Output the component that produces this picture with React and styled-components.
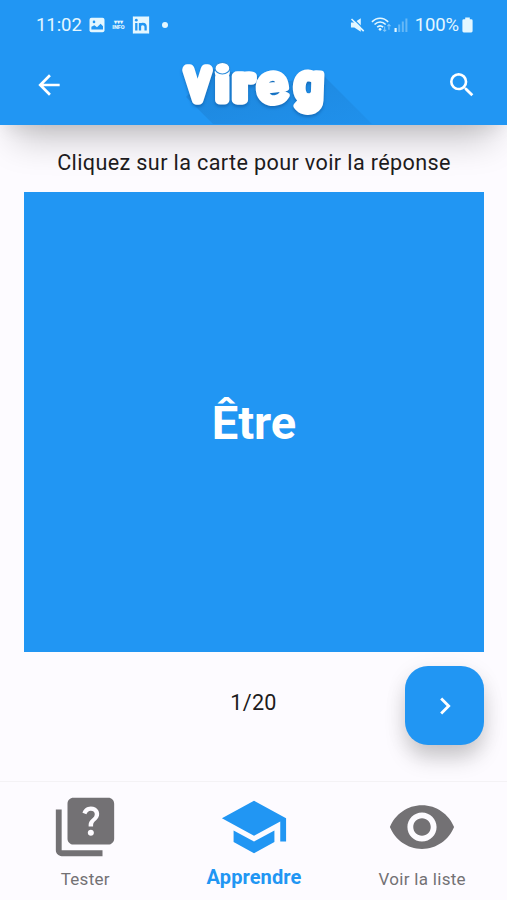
import React from "react";
import styled, { createGlobalStyle } from "styled-components";
import {
  MdArrowBack,
  MdSearch,
  MdChevronRight,
  MdQuiz,
  MdSchool,
  MdVisibility,
} from "react-icons/md";

const BLUE = "#2196f3";

const GlobalStyle = createGlobalStyle`
  * { box-sizing: border-box; }
  body { margin: 0; background: #fdfbff; font-family: Roboto, sans-serif; }
  button { font: inherit; border: 0; padding: 0; background: none; cursor: pointer; }
`;

const Screen = styled.div`
  display: flex;
  flex-direction: column;
  width: 507px;
  height: 900px;
  overflow: hidden;
  background: #fdfbff;
  color: #1d1b20;
`;

const Header = styled.header`
  height: 124.5px;
  flex: none;
  background: ${BLUE};
  color: #fff;
  box-shadow: 0 28px 36px -14px rgba(0, 0, 0, 0.22), 0 10px 16px -6px rgba(0, 0, 0, 0.08);
`;

const StatusBar = styled.div`
  display: flex;
  align-items: center;
  height: 49px;
  padding: 1px 34px 0 36px;
  color: #e4f7ff;
  font-size: 18.5px;
  line-height: 22px;
`;

const Clock = styled.span`
  width: 52.5px;
  letter-spacing: -0.05px;
`;

const Notifications = styled.div`
  display: flex;
  align-items: center;
  flex: 1;
`;

const TinyLabel = styled.span`
  display: flex;
  flex-direction: column;
  width: 15px;
  margin: 0 6px 0 6.5px;
  font-size: 5.5px;
  font-weight: 900;
  line-height: 5px;
  text-align: center;
`;

const Dot = styled.span`
  width: 6px;
  height: 6px;
  margin-left: 12px;
  border-radius: 50%;
  background: currentColor;
`;

const SystemIcons = styled.div`
  display: flex;
  align-items: center;
`;

const Toolbar = styled.div`
  display: flex;
  align-items: center;
  justify-content: space-between;
  height: 75px;
  padding: 0 29px 0 33px;
`;

const IconButton = styled.button`
  display: flex;
  align-items: center;
  justify-content: center;
  width: 32px;
  height: 32px;
  margin-bottom: 3px;
  color: #fff;
`;

const LogoArt = styled.svg`
  display: block;
  width: 232px;
  height: 75px;
  overflow: hidden;
`;

const LogoLetters = styled.g`
  fill: #fff;
  stroke: #fff;
  stroke-linejoin: round;
  stroke-linecap: round;
  text-anchor: middle;
  font-family: Roboto, sans-serif;
  filter: drop-shadow(0 2px 1.5px rgba(0, 50, 110, 0.35));
`;

const Content = styled.main`
  display: flex;
  flex-direction: column;
  flex: 1;
  padding: 24px 23px 0 24px;
`;

const Hint = styled.p`
  margin: 0 0 15.5px;
  font-size: 21.6px;
  line-height: 28px;
  letter-spacing: 0.37px;
  text-align: center;
  white-space: nowrap;
`;

const Card = styled.div`
  display: flex;
  align-items: center;
  justify-content: center;
  flex: none;
  height: 460px;
  background: ${BLUE};
  color: #fff;
  font-size: 47px;
  font-weight: 700;
`;

const Controls = styled.div`
  display: grid;
  grid-template-columns: 1fr 120px 1fr;
  align-items: center;
  margin-top: 14px;
`;

const Counter = styled.span`
  grid-column: 2;
  font-size: 21.6px;
  letter-spacing: 0.3px;
  text-align: center;
  padding: 0 1px 7px 0;
`;

const NextButton = styled.button`
  display: flex;
  align-items: center;
  justify-content: center;
  justify-self: end;
  width: 79px;
  height: 79px;
  border-radius: 23px;
  background: ${BLUE};
  color: #fff;
  box-shadow: 0 15px 22px -2px rgba(0, 0, 0, 0.18), 0 5px 22px rgba(0, 0, 0, 0.08);
`;

const BottomNav = styled.nav`
  display: grid;
  grid-template-columns: 170.5px 167px 169.5px;
  flex: none;
  height: 119px;
  border-top: 1px solid #f4f2f5;
`;

const NavItem = styled.a`
  display: flex;
  flex-direction: column;
  align-items: center;
  padding-top: 10px;
  color: ${(p) => (p.$active ? BLUE : "#737174")};
  font-size: ${(p) => (p.$active ? "20px" : "17px")};
  font-weight: ${(p) => (p.$active ? 700 : 400)};
  letter-spacing: ${(p) => (p.$active ? "0.1px" : "0.3px")};
  line-height: 24px;
`;

const NavLabel = styled.span`
  margin-top: ${(p) => (p.$active ? "3px" : "4.5px")};
`;

const LETTERS = [
  { char: "V", x: 57.5, y: 49.8, size: 40.5, sx: 0.87, stroke: 11.5, tilt: 0, weight: 300 },
  { char: "i", x: 82.2, y: 50.5, size: 42, sx: 1.12, stroke: 9, tilt: 0, weight: 400 },
  { char: "r", x: 103, y: 50.5, size: 45, sx: 1.2, stroke: 9.5, tilt: 0, weight: 400 },
  { char: "e", x: 133.8, y: 53, size: 53, sx: 1.1, stroke: 6.6, tilt: -7, weight: 400 },
  { char: "g", x: 168.5, y: 51.5, size: 50, sx: 1.03, stroke: 8, tilt: 2, weight: 400 },
];

function Logo() {
  return (
    <LogoArt viewBox="0 0 232 75" role="img" aria-label="Vireg">
      <defs>
        <linearGradient id="longShadow" x1="0" y1="0" x2="1" y2="1">
          <stop offset="0" stopColor="#1a76c4" stopOpacity="0.55" />
          <stop offset="1" stopColor="#1e88e0" stopOpacity="0.4" />
        </linearGradient>
      </defs>
      <path d="M46 48 L73 75 H232 L183 26 L150 32 L72 20Z" fill="url(#longShadow)" />
      <LogoLetters>
        {LETTERS.map((l) => (
          <text
            key={l.char}
            fontSize={l.size}
            fontWeight={l.weight}
            strokeWidth={l.stroke}
            transform={`translate(${l.x} ${l.y}) rotate(${l.tilt}) scale(${l.sx} 1)`}
          >
            {l.char}
          </text>
        ))}
      </LogoLetters>
      <ellipse cx="82.4" cy="19.2" rx="7.4" ry="5.8" fill="#fff" stroke="#2b8ddd" strokeWidth="1.1" />
    </LogoArt>
  );
}

function PictureIcon() {
  return (
    <svg width="16" height="16" viewBox="0 0 16 16">
      <rect x="0.5" y="0.8" width="15" height="14.4" rx="2" fill="currentColor" />
      <path d="M2.4 12.5V9.8l3-1.6 2.6 2 3.6-3.4 2.4 2.4v3.3z" fill={BLUE} />
      <circle cx="5" cy="4.9" r="1.3" fill={BLUE} />
    </svg>
  );
}

function LinkedInBadge() {
  return (
    <svg width="18" height="18" viewBox="0 0 18 18" fill="none" stroke={BLUE}>
      <rect x="0.3" width="17.4" height="18" rx="1" fill="#e4f7ff" />
      <path d="M4.3 7v7.5M8 7v7.5M8 10.5c0-3.4 5.6-3.4 5.6.3v3.7" strokeWidth="2.3" />
      <circle cx="4.3" cy="4.2" r="1.4" fill={BLUE} stroke="none" />
    </svg>
  );
}

function MutedIcon() {
  return (
    <svg width="15" height="16" viewBox="0 0 16 16">
      <path d="M1 5.3h3.6L11.5.8v14.4l-6.9-4.5H1z" fill="currentColor" />
      <path d="M2.8.5 15.6 13.3" stroke={BLUE} strokeWidth="1.3" />
      <path d="M1.6 1.6 14.6 14.6" stroke="currentColor" strokeWidth="1.7" />
    </svg>
  );
}

function WifiIcon() {
  return (
    <svg width="21" height="18" viewBox="0 0 22 18" fill="none" stroke="currentColor" strokeWidth="1.7">
      <path d="M1 5.7C6 .7 13 .7 18 5.7M3.7 8.5c3.5-3.4 8.2-3.4 11.7 0M6.5 11.3c2-1.8 4.2-1.8 6.2 0" />
      <circle cx="9.5" cy="13.5" r="1.4" fill="currentColor" stroke="none" />
      <path d="M14.3 10.5v5M12.7 14l1.6 1.6 1.6-1.6M18.8 14V8.5M17.1 10.2l1.7-1.7 1.7 1.7" strokeWidth="1.1" opacity="0.5" />
    </svg>
  );
}

function SignalIcon() {
  return (
    <svg width="14" height="16" viewBox="0 0 14 16" fill="currentColor">
      <rect x="0.5" y="11" width="2.2" height="4" />
      <g opacity="0.35">
        <rect x="4.2" y="7.5" width="2" height="7.5" />
        <rect x="7.8" y="4.5" width="2" height="10.5" />
        <rect x="11.4" y="1.5" width="2" height="13.5" />
      </g>
    </svg>
  );
}

function BatteryIcon() {
  return (
    <svg width="11" height="16" viewBox="0 0 11 16" fill="currentColor">
      <path d="M3.2 0.5h4.6v1.7h1.4q1.4 0 1.4 1.4v10.5q0 1.4-1.4 1.4H1.8Q.4 15.5.4 14.1V3.6q0-1.4 1.4-1.4h1.4z" />
    </svg>
  );
}

const Percent = styled.span`
  margin: 0 3px 0 6.5px;
  letter-spacing: -0.15px;
`;

const WifiSlot = styled.span`
  display: flex;
  margin: 0 2.5px 0 6px;
`;

const TABS = [
  { label: "Tester", Icon: MdQuiz },
  { label: "Apprendre", Icon: MdSchool, active: true },
  { label: "Voir la liste", Icon: MdVisibility },
];

export default function App() {
  return (
    <>
      <GlobalStyle />
      <Screen>
        <Header>
          <StatusBar>
            <Clock>11:02</Clock>
            <Notifications>
              <PictureIcon />
              <TinyLabel>
                <span>▾▾▾</span>
                <span>INFO</span>
              </TinyLabel>
              <LinkedInBadge />
              <Dot />
            </Notifications>
            <SystemIcons>
              <MutedIcon />
              <WifiSlot>
                <WifiIcon />
              </WifiSlot>
              <SignalIcon />
              <Percent>100%</Percent>
              <BatteryIcon />
            </SystemIcons>
          </StatusBar>
          <Toolbar>
            <IconButton aria-label="Retour">
              <MdArrowBack size={34} />
            </IconButton>
            <Logo />
            <IconButton aria-label="Rechercher">
              <MdSearch size={34} />
            </IconButton>
          </Toolbar>
        </Header>
        <Content>
          <Hint>Cliquez sur la carte pour voir la réponse</Hint>
          <Card>Être</Card>
          <Controls>
            <Counter>1/20</Counter>
            <NextButton aria-label="Suivant">
              <MdChevronRight size={34} />
            </NextButton>
          </Controls>
        </Content>
        <BottomNav>
          {TABS.map(({ label, Icon, active }) => (
            <NavItem key={label} $active={active}>
              <Icon size={70} />
              <NavLabel $active={active}>{label}</NavLabel>
            </NavItem>
          ))}
        </BottomNav>
      </Screen>
    </>
  );
}
